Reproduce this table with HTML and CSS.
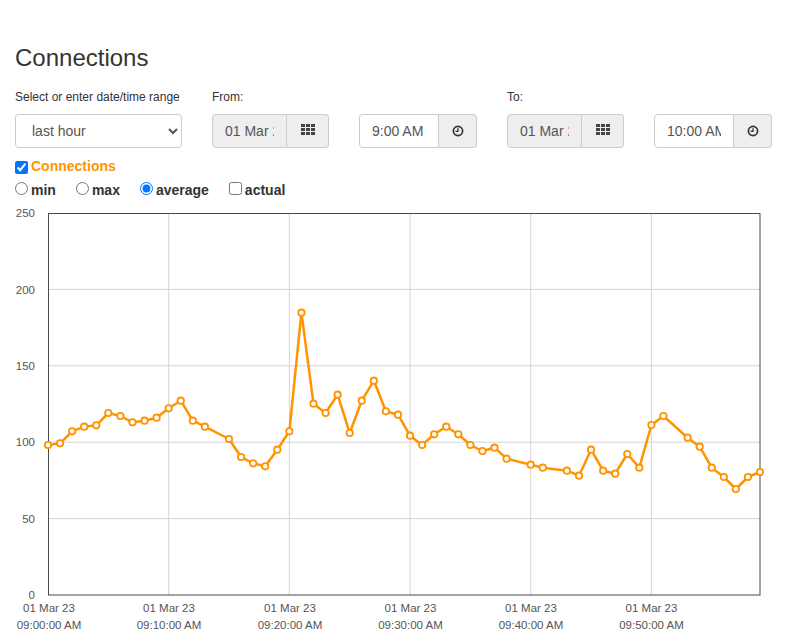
FILE: index.html
```
<!DOCTYPE html>
<html lang="en">
<head>
<meta charset="utf-8">
<title>Connections</title>
<link rel="stylesheet" href="styles.css">
</head>
<body>
<div class="container">
  <h1 class="title">Connections</h1>
  <div class="controls">
    <div class="field range">
      <label class="field-label">Select or enter date/time range</label>
      <select class="select">
        <option>last hour</option>
      </select>
    </div>
    <div class="field">
      <label class="field-label">From:</label>
      <div class="pair">
        <div class="group">
          <input class="input date" type="text" value="01 Mar 23" readonly>
          <span class="addon date-addon">
            <svg class="icon-grid" width="14" height="11" viewBox="0 0 14 11"><g fill="#444"><rect x="0" y="0" width="4" height="3"/><rect x="5" y="0" width="4" height="3"/><rect x="10" y="0" width="4" height="3"/><rect x="0" y="4" width="4" height="3"/><rect x="5" y="4" width="4" height="3"/><rect x="10" y="4" width="4" height="3"/><rect x="0" y="8" width="4" height="3"/><rect x="5" y="8" width="4" height="3"/><rect x="10" y="8" width="4" height="3"/></g></svg>
          </span>
        </div>
        <div class="group">
          <input class="input time" type="text" value="9:00 AM">
          <span class="addon time-addon">
            <svg class="icon-clock" width="12" height="12" viewBox="0 0 12 12"><circle cx="6" cy="6" r="4.6" fill="none" stroke="#333" stroke-width="1.7"/><path d="M6 3.2V6.4H3.6" fill="none" stroke="#333" stroke-width="1.3"/></svg>
          </span>
        </div>
      </div>
    </div>
    <div class="field">
      <label class="field-label">To:</label>
      <div class="pair">
        <div class="group">
          <input class="input date" type="text" value="01 Mar 23" readonly>
          <span class="addon date-addon">
            <svg class="icon-grid" width="14" height="11" viewBox="0 0 14 11"><g fill="#444"><rect x="0" y="0" width="4" height="3"/><rect x="5" y="0" width="4" height="3"/><rect x="10" y="0" width="4" height="3"/><rect x="0" y="4" width="4" height="3"/><rect x="5" y="4" width="4" height="3"/><rect x="10" y="4" width="4" height="3"/><rect x="0" y="8" width="4" height="3"/><rect x="5" y="8" width="4" height="3"/><rect x="10" y="8" width="4" height="3"/></g></svg>
          </span>
        </div>
        <div class="group">
          <input class="input time" type="text" value="10:00 AM">
          <span class="addon time-addon">
            <svg class="icon-clock" width="12" height="12" viewBox="0 0 12 12"><circle cx="6" cy="6" r="4.6" fill="none" stroke="#333" stroke-width="1.7"/><path d="M6 3.2V6.4H3.6" fill="none" stroke="#333" stroke-width="1.3"/></svg>
          </span>
        </div>
      </div>
    </div>
  </div>
  <div class="series-row">
    <label class="series"><input class="check" type="checkbox" checked>Connections</label>
  </div>
  <div class="mode-row">
    <label class="mode"><input class="radio" type="radio" name="mode">min</label>
    <label class="mode"><input class="radio" type="radio" name="mode">max</label>
    <label class="mode"><input class="radio" type="radio" name="mode" checked>average</label>
    <label class="mode"><input class="check-plain" type="checkbox">actual</label>
  </div>
</div>
<svg class="chart" width="787" height="432" viewBox="0 202 787 432">
  <g class="grid" stroke="#d4d4d4" stroke-width="1">
    <line x1="168.7" y1="213" x2="168.7" y2="595"/>
    <line x1="289.4" y1="213" x2="289.4" y2="595"/>
    <line x1="410.1" y1="213" x2="410.1" y2="595"/>
    <line x1="530.7" y1="213" x2="530.7" y2="595"/>
    <line x1="651.4" y1="213" x2="651.4" y2="595"/>
    <line x1="48" y1="518.6" x2="760" y2="518.6"/>
    <line x1="48" y1="442.2" x2="760" y2="442.2"/>
    <line x1="48" y1="365.8" x2="760" y2="365.8"/>
    <line x1="48" y1="289.4" x2="760" y2="289.4"/>
  </g>
  <rect x="48.5" y="213.5" width="711.5" height="381.5" fill="none" stroke="#4a4a4a" stroke-width="1"/>
  <g class="ylabels" font-family="'Liberation Sans', Arial, sans-serif" font-size="11.5" fill="#555" text-anchor="end">
    <text x="35" y="217.2">250</text>
    <text x="35" y="293.6">200</text>
    <text x="35" y="370">150</text>
    <text x="35" y="446.4">100</text>
    <text x="35" y="522.8">50</text>
    <text x="35" y="599">0</text>
  </g>
  <g class="xlabels" font-family="'Liberation Sans', Arial, sans-serif" font-size="11.5" fill="#555" text-anchor="middle">
    <text x="49" y="611.5">01 Mar 23</text><text x="49" y="628.5">09:00:00 AM</text>
    <text x="169" y="611.5">01 Mar 23</text><text x="169" y="628.5">09:10:00 AM</text>
    <text x="290" y="611.5">01 Mar 23</text><text x="290" y="628.5">09:20:00 AM</text>
    <text x="410.5" y="611.5">01 Mar 23</text><text x="410.5" y="628.5">09:30:00 AM</text>
    <text x="531" y="611.5">01 Mar 23</text><text x="531" y="628.5">09:40:00 AM</text>
    <text x="651.5" y="611.5">01 Mar 23</text><text x="651.5" y="628.5">09:50:00 AM</text>
  </g>
  <polyline fill="none" stroke="#ff9400" stroke-width="2.5" stroke-linejoin="round" points="48,445 60.07,443.3 72.14,431.3 84.2,426.7 96.27,425.3 108.34,413 120.41,416 132.48,422.3 144.54,420.7 156.61,417.7 168.68,408.3 180.75,400.7 192.82,420.7 204.88,426.7 229.02,439 241.09,457 253.16,463.3 265.22,466.3 277.29,449.7 289.36,431.3 301.43,312.7 313.5,403.7 325.56,413 337.63,394.7 349.7,433 361.77,400.7 373.84,380.7 385.9,411.3 397.97,414.7 410.04,435.7 422.11,445 434.18,434.3 446.24,426.7 458.31,434.3 470.38,445 482.45,451 494.52,447.7 506.58,458.7 530.72,464.7 542.79,467.7 566.92,470.7 578.99,475.7 591.06,449.7 603.13,470.7 615.2,473.7 627.26,454 639.33,467.7 651.4,425 663.47,416 687.6,437.7 699.67,446.7 711.74,467.7 723.81,477 735.88,489 747.94,477 760,472"/>
  <g class="markers" fill="#fff" stroke="#ff9400" stroke-width="1.8">
    <circle cx="48" cy="445" r="3.2"/><circle cx="60.07" cy="443.3" r="3.2"/><circle cx="72.14" cy="431.3" r="3.2"/><circle cx="84.2" cy="426.7" r="3.2"/><circle cx="96.27" cy="425.3" r="3.2"/><circle cx="108.34" cy="413" r="3.2"/><circle cx="120.41" cy="416" r="3.2"/><circle cx="132.48" cy="422.3" r="3.2"/><circle cx="144.54" cy="420.7" r="3.2"/><circle cx="156.61" cy="417.7" r="3.2"/><circle cx="168.68" cy="408.3" r="3.2"/><circle cx="180.75" cy="400.7" r="3.2"/><circle cx="192.82" cy="420.7" r="3.2"/><circle cx="204.88" cy="426.7" r="3.2"/><circle cx="229.02" cy="439" r="3.2"/><circle cx="241.09" cy="457" r="3.2"/><circle cx="253.16" cy="463.3" r="3.2"/><circle cx="265.22" cy="466.3" r="3.2"/><circle cx="277.29" cy="449.7" r="3.2"/><circle cx="289.36" cy="431.3" r="3.2"/><circle cx="301.43" cy="312.7" r="3.2"/><circle cx="313.5" cy="403.7" r="3.2"/><circle cx="325.56" cy="413" r="3.2"/><circle cx="337.63" cy="394.7" r="3.2"/><circle cx="349.7" cy="433" r="3.2"/><circle cx="361.77" cy="400.7" r="3.2"/><circle cx="373.84" cy="380.7" r="3.2"/><circle cx="385.9" cy="411.3" r="3.2"/><circle cx="397.97" cy="414.7" r="3.2"/><circle cx="410.04" cy="435.7" r="3.2"/><circle cx="422.11" cy="445" r="3.2"/><circle cx="434.18" cy="434.3" r="3.2"/><circle cx="446.24" cy="426.7" r="3.2"/><circle cx="458.31" cy="434.3" r="3.2"/><circle cx="470.38" cy="445" r="3.2"/><circle cx="482.45" cy="451" r="3.2"/><circle cx="494.52" cy="447.7" r="3.2"/><circle cx="506.58" cy="458.7" r="3.2"/><circle cx="530.72" cy="464.7" r="3.2"/><circle cx="542.79" cy="467.7" r="3.2"/><circle cx="566.92" cy="470.7" r="3.2"/><circle cx="578.99" cy="475.7" r="3.2"/><circle cx="591.06" cy="449.7" r="3.2"/><circle cx="603.13" cy="470.7" r="3.2"/><circle cx="615.2" cy="473.7" r="3.2"/><circle cx="627.26" cy="454" r="3.2"/><circle cx="639.33" cy="467.7" r="3.2"/><circle cx="651.4" cy="425" r="3.2"/><circle cx="663.47" cy="416" r="3.2"/><circle cx="687.6" cy="437.7" r="3.2"/><circle cx="699.67" cy="446.7" r="3.2"/><circle cx="711.74" cy="467.7" r="3.2"/><circle cx="723.81" cy="477" r="3.2"/><circle cx="735.88" cy="489" r="3.2"/><circle cx="747.94" cy="477" r="3.2"/><circle cx="760" cy="472" r="3.2"/>
  </g>
</svg>
</body>
</html>
```
FILE: styles.css
```
html, body {
  margin: 0;
  padding: 0;
  overflow: hidden;
  background: #fff;
}
body {
  font-family: "Liberation Sans", Arial, sans-serif;
  font-size: 14px;
  color: #333;
}
.container {
  padding: 0 15px;
}
.title {
  margin: 45px 0 0;
  font-size: 24px;
  font-weight: normal;
  line-height: 26px;
  color: #333;
}
.controls {
  display: flex;
  gap: 30px;
  margin-top: 18px;
  align-items: flex-start;
}
.field {
  display: flex;
  flex-direction: column;
}
.field-label {
  display: block;
  font-size: 12px;
  line-height: 17px;
  margin-bottom: 8px;
  color: #333;
}
.select {
  width: 167px;
  height: 34px;
  box-sizing: border-box;
  border: 1px solid #ccc;
  border-radius: 4px;
  background: #fff;
  color: #555;
  font-family: "Liberation Sans", Arial, sans-serif;
  font-size: 14px;
  padding: 6px 8px 6px 12px;
  margin: 0;
}
.pair {
  display: flex;
  gap: 30px;
}
.group {
  display: flex;
  height: 34px;
}
.input {
  box-sizing: border-box;
  height: 34px;
  margin: 0;
  padding: 6px 12px;
  border: 1px solid #ccc;
  border-radius: 4px 0 0 4px;
  font-family: "Liberation Sans", Arial, sans-serif;
  font-size: 14px;
  color: #555;
  background: #fff;
  outline: none;
}
.input.date {
  width: 75px;
  background: #eee;
}
.input.time {
  width: 80px;
}
.addon {
  box-sizing: border-box;
  height: 34px;
  display: flex;
  align-items: center;
  justify-content: center;
  background: #eee;
  border: 1px solid #ccc;
  border-left: 0;
  border-radius: 0 4px 4px 0;
}
.date-addon {
  width: 42px;
}
.time-addon {
  width: 38px;
}
.icon-grid {
  display: block;
  margin-top: -3px;
}
.icon-clock {
  display: block;
  margin-top: -1px;
}
.series-row {
  margin-top: 6px;
  line-height: 24px;
}
.series {
  font-weight: bold;
  color: #ff9400;
}
.check {
  width: 13px;
  height: 13px;
  margin: 0 3px 0 0;
  vertical-align: -3px;
}
.mode-row {
  display: flex;
  gap: 20px;
  line-height: 24px;
}
.mode {
  font-weight: bold;
  color: #333;
}
.radio, .check-plain {
  width: 13px;
  height: 13px;
  margin: 0 3px 0 0;
  vertical-align: baseline;
}
.chart {
  display: block;
}
```
